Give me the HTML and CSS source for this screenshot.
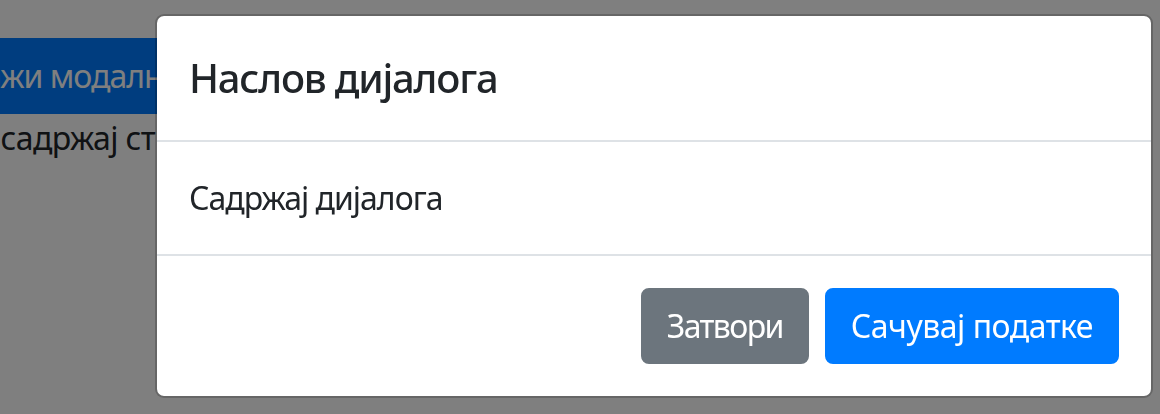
FILE: index.html
```html
<!DOCTYPE html>
<html lang="sr">
<head>
<meta charset="utf-8">
<title>Модални дијалог</title>
<link rel="stylesheet" href="styles.css">
</head>
<body>
<div class="page">
  <button class="btn btn-primary launch" type="button">Прикажи модални дијалог</button>
  <p class="page-text">Остали садржај странице</p>
</div>
<div class="backdrop"></div>
<div class="modal">
  <div class="modal-content">
    <div class="modal-header">
      <h5 class="modal-title">Наслов дијалога</h5>
    </div>
    <div class="modal-body">
      <p class="modal-text">Садржај дијалога</p>
    </div>
    <div class="modal-footer">
      <button class="btn btn-secondary" type="button">Затвори</button>
      <button class="btn btn-primary btn-save" type="button">Сачувај податке</button>
    </div>
  </div>
</div>
</body>
</html>
```

FILE: styles.css
```css
* { box-sizing: border-box; }
html, body {
  margin: 0;
  padding: 0;
  background: #fff;
  overflow: hidden;
}
body {
  font-family: "Noto Sans", "Open Sans", "DejaVu Sans", sans-serif;
  font-size: 32px;
  line-height: 1.5;
  letter-spacing: -1px;
  color: #212529;
  width: 1160px;
  height: 414px;
}
.page {
  padding-top: 38px;
  white-space: nowrap;
}
.launch {
  margin-left: -117px;
}
.page-text {
  margin: 0 0 0 -115px;
  letter-spacing: -0.6px;
}
.btn {
  display: inline-block;
  font-family: inherit;
  font-size: 32px;
  line-height: 48px;
  font-weight: 400;
  letter-spacing: -1px;
  padding: 12px 24px;
  border: 2px solid transparent;
  border-radius: 8px;
  color: #fff;
  cursor: pointer;
}
.btn-primary { background: #007bff; border-color: #007bff; }
.btn-secondary {
  background: #6c757d;
  border-color: #6c757d;
  letter-spacing: -1.6px;
}
.btn-save { letter-spacing: -0.5px; }
.backdrop {
  position: fixed;
  inset: 0;
  background: rgba(0, 0, 0, 0.5);
}
.modal {
  position: fixed;
  inset: 0;
  padding: 14px 0 0 155px;
}
.modal-content {
  width: 998px;
  background: #fff;
  border: 2px solid rgba(0, 0, 0, 0.2);
  background-clip: padding-box;
  border-radius: 9px;
  display: flex;
  flex-direction: column;
}
.modal-header {
  padding: 32px;
  border-bottom: 2px solid #dee2e6;
}
.modal-title {
  margin: 0;
  font-size: 40px;
  line-height: 60px;
  font-weight: 500;
  letter-spacing: -1.2px;
}
.modal-body {
  padding: 32px;
}
.modal-text { margin: 0; }
.modal-footer {
  display: flex;
  justify-content: flex-end;
  align-items: center;
  gap: 16px;
  padding: 32px;
  border-top: 2px solid #dee2e6;
}
```
